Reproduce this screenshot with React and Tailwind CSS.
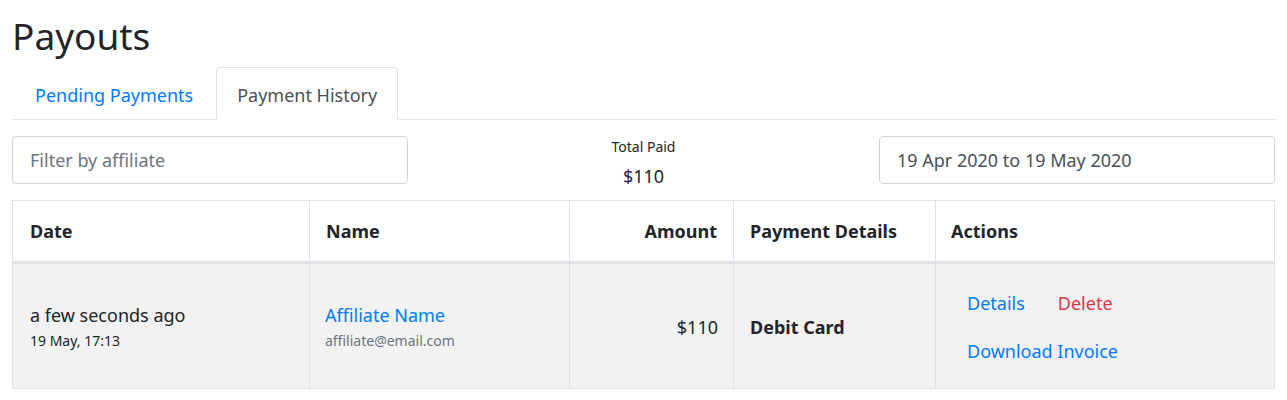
export default function App() {
  return (
    <div className="min-h-[400px] bg-white px-3 text-[18px] text-[#212529]" style={{ fontFamily: '"Segoe UI", "Noto Sans", sans-serif' }}>
      <h1 className="pt-[14px] pb-[9px] text-[37px] leading-[44px]">Payouts</h1>

      <div className="flex border-b border-[#dee2e6]">
        <a className="-mb-px px-[22px] pt-[14px] pb-[11px] leading-[26px] text-[#007bff] border border-transparent">Pending Payments</a>
        <a className="-mb-px px-[20px] pt-[14px] pb-[11px] leading-[26px] text-[#495057] bg-white border border-[#dee2e6] border-b-white rounded-t-[4px]">Payment History</a>
      </div>

      <div className="mt-[16px] flex h-[48px] items-start justify-between">
        <input
          placeholder="Filter by affiliate"
          className="w-[396px] h-[48px] rounded-[4px] border border-[#ced4da] px-[17px] text-[18px] placeholder:text-[#6c757d] outline-none"
        />
        <div className="flex flex-col items-center w-[100px] pt-[1px]">
          <span className="text-[14px] leading-[20px]">Total Paid</span>
          <span className="mt-[6px] text-[18px] leading-[26px]">$110</span>
        </div>
        <div className="w-[396px] h-[48px] rounded-[4px] border border-[#ced4da] px-[17px] flex items-center text-[#495057]">
          19 Apr 2020 to 19 May 2020
        </div>
      </div>

      <table className="mt-[16px] w-full border-collapse border border-[#dee2e6]">
        <thead>
          <tr className="h-[62px] border-b-[3px] border-[#dee2e6]">
            <th className="w-[297px] border border-[#dee2e6] px-[17px] text-left font-bold">Date</th>
            <th className="w-[260px] border border-[#dee2e6] px-[16px] text-left font-bold">Name</th>
            <th className="w-[164px] border border-[#dee2e6] px-[16px] text-right font-bold">Amount</th>
            <th className="w-[202px] border border-[#dee2e6] px-[16px] text-left font-bold">Payment Details</th>
            <th className="border border-[#dee2e6] px-[15px] text-left font-bold">Actions</th>
          </tr>
        </thead>
        <tbody>
          <tr className="h-[126px] bg-[#f2f2f2]">
            <td className="border border-[#dee2e6] px-[17px] pt-[3px]">
              <div className="leading-[26px]">a few seconds ago</div>
              <div className="text-[14px] leading-[26px]">19 May, 17:13</div>
            </td>
            <td className="border border-[#dee2e6] px-[15px] pt-[3px]">
              <div className="leading-[26px] text-[#007bff]">Affiliate Name</div>
              <div className="text-[14px] leading-[26px] text-[#6c757d]">affiliate@email.com</div>
            </td>
            <td className="border border-[#dee2e6] px-[15px] pt-[2px] text-right">$110</td>
            <td className="border border-[#dee2e6] px-[16px] pt-[2px] font-bold">Debit Card</td>
            <td className="border border-[#dee2e6] px-[31px] pt-[2px]">
              <div className="flex gap-[33px] leading-[26px]">
                <a className="text-[#007bff]">Details</a>
                <a className="text-[#dc3545]">Delete</a>
              </div>
              <div className="mt-[22px] leading-[26px] text-[#007bff]">Download Invoice</div>
            </td>
          </tr>
        </tbody>
      </table>
    </div>
  )
}
